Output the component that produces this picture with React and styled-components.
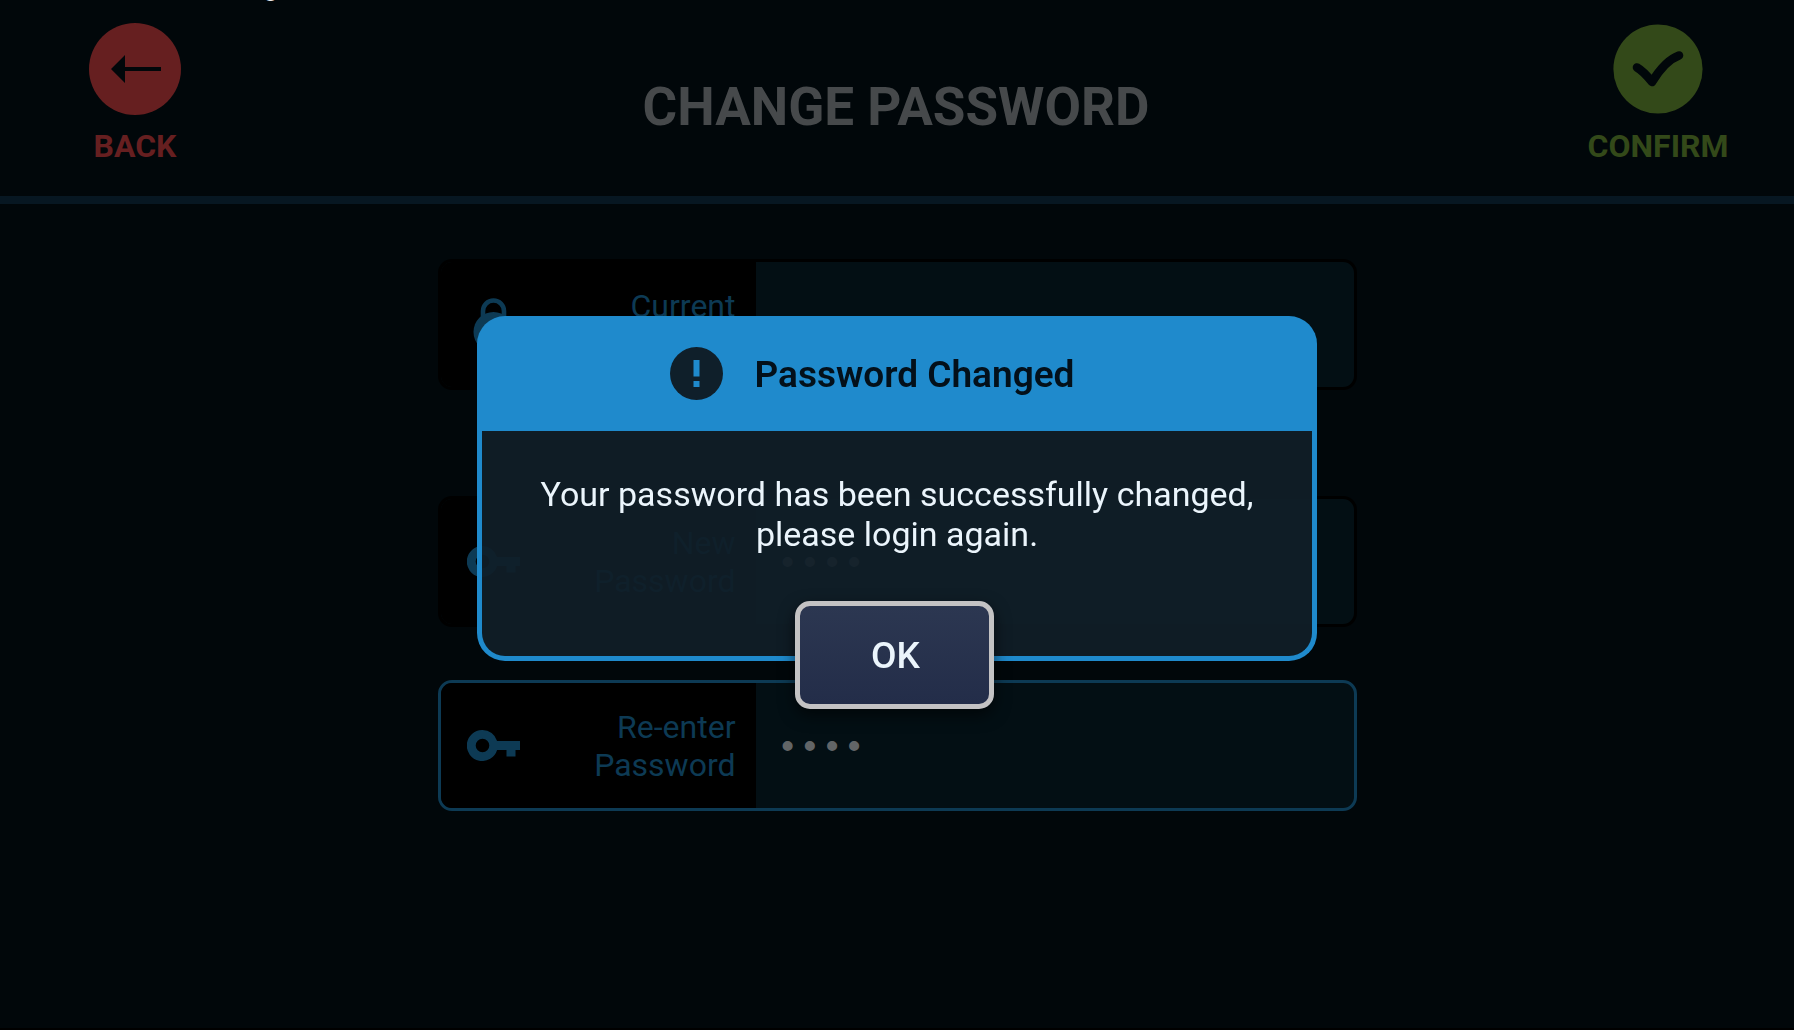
import React, { useState } from 'react';
import styled, { createGlobalStyle } from 'styled-components';

const GlobalStyle = createGlobalStyle`
  * {
    box-sizing: border-box;
  }
  body {
    margin: 0;
    background: #01070a;
    font-family: Roboto, sans-serif;
  }
`;

const Page = styled.div`
  display: flex;
  flex-direction: column;
  min-height: 100vh;
  border-bottom: 2px solid #000;
`;

const StatusTail = styled.span`
  position: absolute;
  top: 0;
  left: 263px;
  height: 1px;
  overflow: hidden;
  display: flex;
  align-items: flex-end;
  color: #e8eaec;
  font-size: 28px;
  line-height: 30px;
`;

const Header = styled.header`
  display: grid;
  grid-template-columns: 270px 1fr 272px;
  height: 204px;
  border-bottom: 8px solid #071722;
`;

const HeaderButton = styled.button`
  display: flex;
  flex-direction: column;
  align-items: center;
  gap: 12px;
  padding: 23px 0 0;
  border: 0;
  background: none;
  color: ${props => props.$color};
  font: 700 32px/38px Roboto, sans-serif;
  cursor: pointer;
`;

const Title = styled.h1`
  margin: 0;
  padding-top: 75px;
  color: #46494b;
  font-size: 53px;
  font-weight: 700;
  line-height: 64px;
  text-align: center;
`;

const Form = styled.form`
  display: flex;
  flex-direction: column;
  gap: 53px;
  width: 100%;
  max-width: 919px;
  margin: 0 auto;
  padding-top: 55px;
`;

const Field = styled.div`
  display: grid;
  grid-template-columns: 315px 1fr;
  height: 131px;
  margin-bottom: ${props => (props.$spaced ? '53px' : 0)};
  border: 3px solid ${props => (props.$active ? '#0d3a54' : '#000')};
  border-radius: 14px;
  background: #030f14;
  overflow: hidden;
`;

const FieldLabel = styled.label`
  display: flex;
  align-items: center;
  justify-content: space-between;
  padding: 0 20px 0 26px;
  background: #000;
  color: #0d3a54;
  font-size: 32px;
  line-height: 38px;
  text-align: right;
`;

const LabelText = styled.span`
  width: 150px;
`;

const FieldInput = styled.input`
  width: 100%;
  min-width: 0;
  padding: 4px 21px 0;
  border: 0;
  outline: 0;
  background: transparent;
  color: #626567;
  font: 37px 'Liberation Mono', monospace;
`;

const Overlay = styled.div`
  position: fixed;
  inset: 0;
  display: flex;
  align-items: center;
  justify-content: center;
  padding-bottom: 5px;
`;

const Dialog = styled.section`
  display: flex;
  flex-direction: column;
  align-items: center;
  width: 100%;
  max-width: 840px;
`;

const CardHeader = styled.div`
  display: flex;
  align-items: center;
  justify-content: center;
  gap: 32px;
  width: 100%;
  height: 115px;
  padding-right: 50px;
  border-radius: 28px 28px 0 0;
  background: #1f8acc;
`;

const CardTitle = styled.h2`
  margin: 0;
  padding-top: 2px;
  color: #03101a;
  font-size: 37px;
  font-weight: 600;
  line-height: 44px;
`;

const CardBody = styled.div`
  width: 100%;
  height: 230px;
  border: 5px solid #1f8acc;
  border-top: 0;
  border-radius: 0 0 28px 28px;
  background: rgba(16, 30, 40, 0.93);
`;

const Message = styled.p`
  margin: 0;
  padding: 43px 40px 0;
  color: #ebf5fc;
  font-size: 34px;
  line-height: 40px;
  text-align: center;
`;

const OkButton = styled.button`
  position: relative;
  width: 199px;
  height: 108px;
  margin: -60px 6px 0 0;
  padding: 2px 0 0 3px;
  border: 5px solid #c4c3c4;
  border-radius: 15px;
  background: linear-gradient(#2c3751, #232d49);
  box-shadow: 0 6px 16px rgba(0, 0, 0, 0.6);
  color: #ebf5fc;
  font: 500 37px/44px Roboto, sans-serif;
  cursor: pointer;
`;

const BackIcon = () => (
  <svg width="92" height="92" viewBox="0 0 92 92" aria-hidden="true">
    <circle cx="46" cy="46" r="46" fill="#661f20" />
    <path d="M22 46 36 32v12h36v4H36v12z" fill="#01070a" />
  </svg>
);

const ConfirmIcon = () => (
  <svg width="92" height="92" viewBox="0 0 92 92" aria-hidden="true">
    <circle cx="46" cy="46" r="44.6" fill="#334919" />
    <path
      d="M25 44.5C31 48 35 52.5 40 59C47 47.5 56 36.5 67 32.5"
      fill="none"
      stroke="#01070a"
      strokeWidth="8.6"
      strokeLinecap="round"
      strokeLinejoin="round"
    />
  </svg>
);

const LockIcon = () => (
  <svg width="53" height="54" viewBox="0 0 53 54" aria-hidden="true">
    <path
      d="M16 24V13a10.5 10.5 0 0 1 21 0v11"
      fill="none"
      stroke="#0d3a54"
      strokeWidth="4.6"
    />
    <circle cx="26.5" cy="34" r="20" fill="#0d3a54" />
  </svg>
);

const KeyIcon = () => (
  <svg width="53" height="31" viewBox="0 0 53 31" aria-hidden="true">
    <path
      fill="#0d3a54"
      fillRule="evenodd"
      d="M15.5 0a15.5 15.5 0 0 1 14.6 11H53v9h-4.5v6.500h-9V20h-9.400A15.5 15.5 0 1 1 15.5 0zm0 8.700a6.8 6.8 0 1 0 0 13.6 6.8 6.8 0 0 0 0-13.6z"
    />
  </svg>
);

const AlertIcon = () => (
  <svg width="53" height="53" viewBox="0 0 53 53" aria-hidden="true">
    <circle cx="26.5" cy="26.5" r="26.5" fill="#0f1f2a" />
    <path d="M23.5 13h6v16.5h-6zM23.5 34h6v6h-6z" fill="#1f8acc" />
  </svg>
);

const fields = [
  { id: 'current', label: 'Current Password', value: '', icon: LockIcon, spaced: true },
  { id: 'new', label: 'New Password', value: '1234', icon: KeyIcon },
  { id: 'repeat', label: 'Re-enter Password', value: '1234', icon: KeyIcon, active: true }
];

export default function App() {
  const [open, setOpen] = useState(true);

  return (
    <Page>
      <GlobalStyle />
      <StatusTail>g</StatusTail>
      <Header>
        <HeaderButton type="button" $color="#661f20">
          <BackIcon />
          BACK
        </HeaderButton>
        <Title>CHANGE PASSWORD</Title>
        <HeaderButton type="submit" form="password-form" $color="#334919">
          <ConfirmIcon />
          CONFIRM
        </HeaderButton>
      </Header>
      <Form id="password-form" onSubmit={e => e.preventDefault()}>
        {fields.map(({ id, label, value, icon: Icon, spaced, active }) => (
          <Field key={id} $spaced={spaced} $active={active}>
            <FieldLabel htmlFor={id}>
              <Icon />
              <LabelText>{label}</LabelText>
            </FieldLabel>
            <FieldInput id={id} type="password" defaultValue={value} />
          </Field>
        ))}
      </Form>
      {open && (
        <Overlay>
          <Dialog role="alertdialog" aria-labelledby="dialog-title">
            <CardHeader>
              <AlertIcon />
              <CardTitle id="dialog-title">Password Changed</CardTitle>
            </CardHeader>
            <CardBody>
              <Message>
                Your password has been successfully changed, please login again.
              </Message>
            </CardBody>
            <OkButton type="button" onClick={() => setOpen(false)}>
              OK
            </OkButton>
          </Dialog>
        </Overlay>
      )}
    </Page>
  );
}
